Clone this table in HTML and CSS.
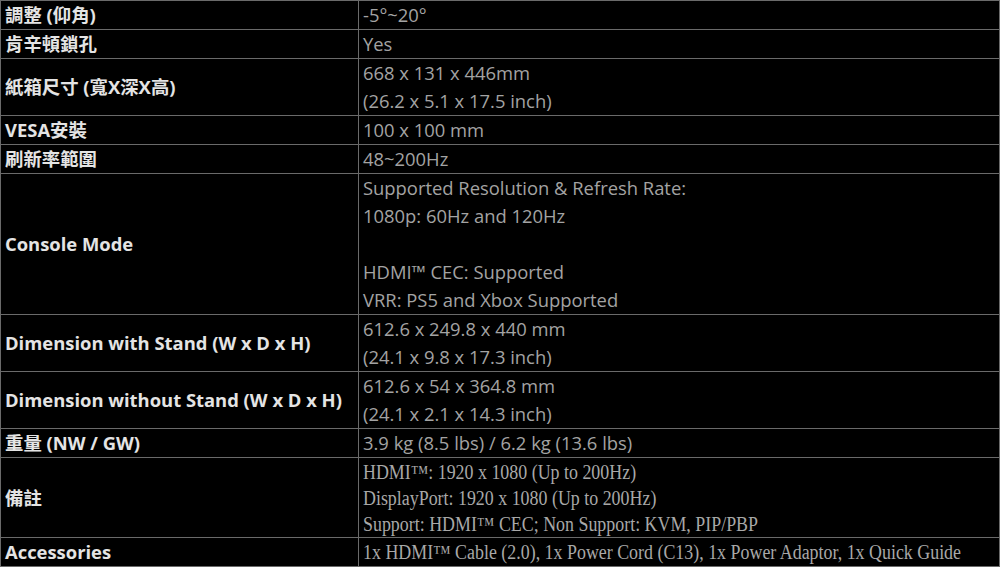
FILE: index.html
```html
<!DOCTYPE html>
<html lang="zh-Hant">
<head>
<meta charset="utf-8">
<title>Specs</title>
<link rel="stylesheet" href="styles.css">
</head>
<body>
<table class="spec">
  <colgroup><col class="c-label"><col class="c-value"></colgroup>
  <tbody>
    <tr><th>調整 (仰角)</th><td>-5°~20°</td></tr>
    <tr><th>肯辛頓鎖孔</th><td>Yes</td></tr>
    <tr><th>紙箱尺寸 (寬X深X高)</th><td>668 x 131 x 446mm<br>(26.2 x 5.1 x 17.5 inch)</td></tr>
    <tr><th>VESA安裝</th><td>100 x 100 mm</td></tr>
    <tr><th>刷新率範圍</th><td>48~200Hz</td></tr>
    <tr><th>Console Mode</th><td>Supported Resolution &amp; Refresh Rate:<br>1080p: 60Hz and 120Hz<br><br>HDMI™ CEC: Supported<br>VRR: PS5 and Xbox Supported</td></tr>
    <tr><th>Dimension with Stand (W x D x H)</th><td>612.6 x 249.8 x 440 mm<br>(24.1 x 9.8 x 17.3 inch)</td></tr>
    <tr><th>Dimension without Stand (W x D x H)</th><td>612.6 x 54 x 364.8 mm<br>(24.1 x 2.1 x 14.3 inch)</td></tr>
    <tr><th>重量 (NW / GW)</th><td>3.9 kg (8.5 lbs) / 6.2 kg (13.6 lbs)</td></tr>
    <tr class="notes"><th>備註</th><td class="serif"><span class="sq">HDMI™: 1920 x 1080 (Up to 200Hz)</span><br><span class="sq">DisplayPort: 1920 x 1080 (Up to 200Hz)</span><br><span class="sq">Support: HDMI™ CEC; Non Support: KVM, PIP/PBP</span></td></tr>
    <tr><th>Accessories</th><td class="serif"><span class="sq">1x HDMI™ Cable (2.0), 1x Power Cord (C13), 1x Power Adaptor, 1x Quick Guide</span></td></tr>
  </tbody>
</table>
</body>
</html>
```
FILE: styles.css
```css
html, body {
  margin: 0;
  padding: 0;
  background: #000;
}

.spec {
  border-collapse: collapse;
  table-layout: fixed;
  width: 999px;
  font-family: "Open Sans", "Noto Sans CJK TC", sans-serif;
  font-size: 18.4px;
  line-height: 28px;
}

.c-label { width: 358px; }
.c-value { width: 641px; }

.spec th,
.spec td {
  border: 1px solid #6a6a6a;
  padding: 0 0 0 4px;
  text-align: left;
  white-space: nowrap;
}

.spec th {
  color: #e4e4e4;
  font-weight: 700;
  vertical-align: middle;
}

.spec td {
  color: #a3a3a3;
  font-weight: 400;
  vertical-align: top;
}

.spec td.serif {
  font-family: "Liberation Serif", "Noto Sans CJK TC", serif;
  font-size: 20px;
  color: #a8a8a8;
}

.notes td.serif {
  line-height: 26px;
  padding-top: 1px;
}

.sq {
  display: inline-block;
  transform: scaleX(0.895);
  transform-origin: left center;
}
```
